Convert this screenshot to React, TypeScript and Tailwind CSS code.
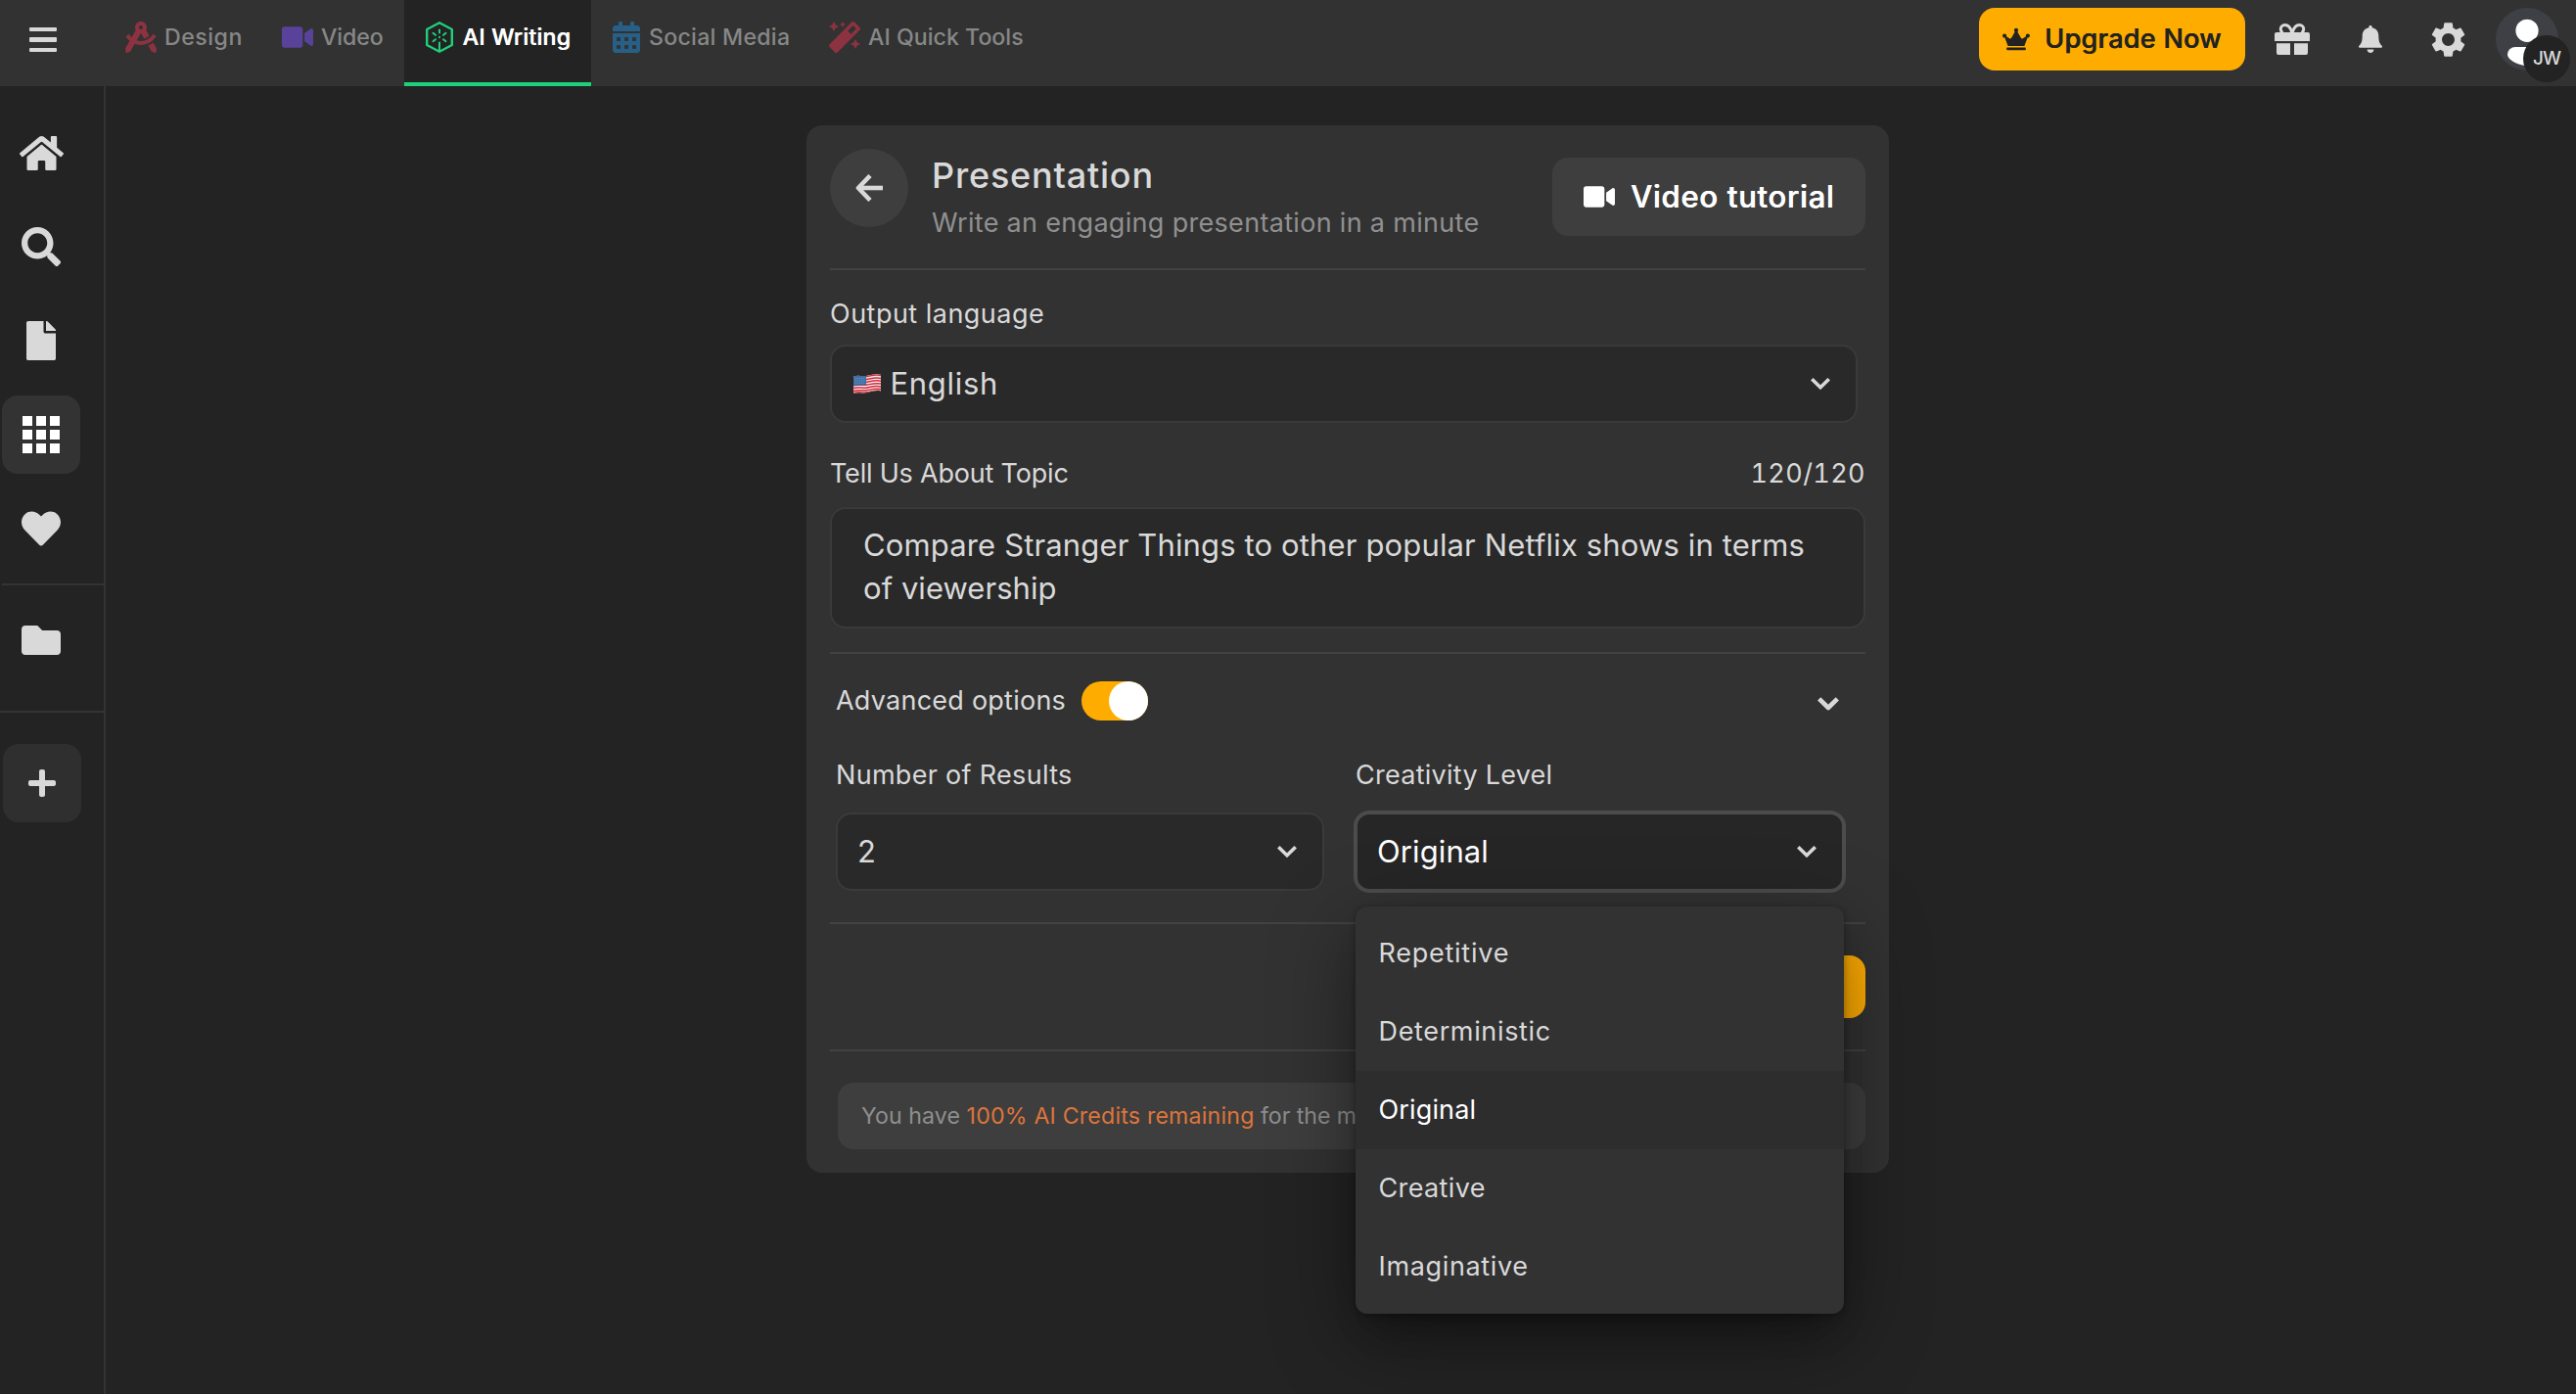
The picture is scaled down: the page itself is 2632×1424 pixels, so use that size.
import type { ReactNode } from "react";
import {
  FaCalendarAlt,
  FaCrown,
  FaDraftingCompass,
  FaFile,
  FaFolder,
  FaHeart,
  FaHome,
  FaMagic,
  FaPlus,
  FaSearch,
  FaVideo,
} from "react-icons/fa";
import { MdSettings } from "react-icons/md";

function AiIcon() {
  return (
    <svg viewBox="0 0 28 32" className="h-8 w-7 shrink-0" fill="none" stroke="#1fd07a" strokeWidth="2.4" strokeLinecap="round" strokeLinejoin="round">
      <path d="M14 1.3 26.8 8v16L14 30.7 1.2 24V8z" />
      <path d="M14 8.5v3M14 21.5V30M7.500 11.800l2.500 2M20.500 11.800l-2.500 2M7.500 20.200l2.500-2M20.500 20.200l-2.500-2" strokeWidth="2" />
      <path d="M14 15.8v.4" strokeWidth="2" />
    </svg>
  );
}

function GiftIcon() {
  return (
    <svg viewBox="0 0 36 32" className="h-8 w-9" fill="#d9d9d9">
      <path d="M17.8 9.5C16.500 4.500 13.500 1.500 10.600 1.500 8 1.500 6.300 3.400 6.300 5.600S7.500 9.500 9 9.500M18.200 9.500C19.500 4.500 22.500 1.500 25.400 1.500 28 1.500 29.700 3.400 29.700 5.600S28.500 9.500 27 9.500" fill="none" stroke="#d9d9d9" strokeWidth="3" />
      <path d="M2 9h32a2 2 0 0 1 2 2v7H0v-7a2 2 0 0 1 2-2z" />
      <path d="M2 20.300h14V32H4a2 2 0 0 1-2-2zM20 20.300h14V30a2 2 0 0 1-2 2H20z" />
    </svg>
  );
}

function BellIcon() {
  return (
    <svg viewBox="0 0 24 28" className="h-7 w-6" fill="#d9d9d9">
      <path d="M12 0c1 0 1.700.700 1.700 1.700v.600c4 .800 6.600 3.900 6.600 8.200 0 6 1.200 8.300 3.600 10.600.400.800 0 1.700-.900 1.700H1c-.900 0-1.300-.900-.900-1.700 2.400-2.300 3.600-4.600 3.600-10.600 0-4.300 2.600-7.400 6.600-8.200v-.600C10.300.700 11 0 12 0z" />
      <path d="M8.600 24.600h6.800c0 2-1.500 3.400-3.400 3.400s-3.400-1.400-3.400-3.400z" />
    </svg>
  );
}

function Chevron() {
  return (
    <svg viewBox="0 0 20 12" className="h-3 w-5 shrink-0" fill="none" stroke="#d9d9d9" strokeWidth="3.600">
      <path d="M1.300 1.300 10 9.700l8.700-8.400" />
    </svg>
  );
}

function Flag() {
  return (
    <svg viewBox="0 0 28 20" className="h-5 w-7 shrink-0">
      <defs>
        <clipPath id="wave">
          <path d="M0 2.500C5 .800 9 2.800 14 1.800S23 -.500 28 .800V17.500C23 16.300 19 17.800 14 19S5 18.300 0 19.800z" />
        </clipPath>
      </defs>
      <g clipPath="url(#wave)">
        <rect width="28" height="20" fill="#f4f0f0" />
        <g fill="none" stroke="#d3283b" strokeWidth="1.500">
          <path d="M0 3.200C5 1.500 9 3.500 14 2.500S23 .200 28 1.500" />
          <path d="M0 6.100C5 4.400 9 6.400 14 5.400S23 3.100 28 4.400" />
          <path d="M0 9C5 7.300 9 9.300 14 8.300S23 6 28 7.300" />
          <path d="M0 11.800C5 10.100 9 12.100 14 11.100S23 8.800 28 10.100" />
          <path d="M0 14.600C5 12.900 9 14.900 14 13.900S23 11.600 28 12.900" />
          <path d="M0 17.300C5 15.600 9 17.600 14 16.600S23 14.300 28 15.600" />
          <path d="M0 19.600C5 17.900 9 19.600 14 18.800S23 16.600 28 17.600" />
        </g>
        <path d="M0 0h13v11.300c-5 .900-8-.600-13 .900z" fill="#3d6ea5" />
        <path d="M1.500 4.500h11M1.500 6.800h11M1.500 9.100h11" stroke="#8fb0d0" strokeWidth=".8" strokeDasharray="1 1.200" />
      </g>
    </svg>
  );
}

function Tab({ width, icon, label }: { width: string; icon: ReactNode; label: ReactNode }) {
  return (
    <div className={`flex h-full shrink-0 items-center gap-2 pb-3 pl-5 text-[23.15px] font-medium text-[#878787] ${width}`}>
      {icon}
      {label}
    </div>
  );
}

function SideItem({ children, active = false }: { children: ReactNode; active?: boolean }) {
  return (
    <div className={`ml-0.5 flex h-20 w-20 items-center justify-center rounded-2xl ${active ? "bg-[#333333]" : ""}`}>
      {children}
    </div>
  );
}

function Divider({ className }: { className: string }) {
  return <div className={`h-0.5 bg-[#424242] ${className}`} />;
}

const options = [
  { label: "Repetitive", style: "tracking-[0.75px] text-[#d9d9d9]" },
  { label: "Deterministic", style: "tracking-[0.65px] text-[#d9d9d9]" },
  { label: "Original", style: "tracking-[0.15px] bg-[#2d2d2d] text-white" },
  { label: "Creative", style: "tracking-[0.38px] text-[#d9d9d9]" },
  { label: "Imaginative", style: "tracking-[0.65px] text-[#d9d9d9]" },
];

function Header() {
  return (
    <header className="flex h-[88px] w-full bg-[#323232]">
      <div className="flex w-[108px] flex-col gap-[6px] pt-[27.500px] pl-[30px]">
        <div className="h-[4.500px] w-7 rounded-[1px] bg-[#d9d9d9]" />
        <div className="h-[4.500px] w-7 rounded-[1px] bg-[#d9d9d9]" />
        <div className="h-[4.500px] w-7 rounded-[1px] bg-[#d9d9d9]" />
      </div>
      <Tab width="w-[160px]" icon={<FaDraftingCompass className="h-8 w-8 text-[#8d3240]" />} label={<span className="tracking-[0.5px]">Design</span>} />
      <Tab width="w-[145px]" icon={<FaVideo className="h-8 w-8 text-[#59429a]" />} label={<span className="tracking-[-0.08px]">Video</span>} />
      <div className="flex h-full w-[191px] shrink-0 items-center gap-[10px] border-b-4 border-[#1fd07a] bg-[#232323] pb-2 pl-[21.500px] text-[23.15px] font-medium text-white">
        <AiIcon />
        <span className="tracking-[0.22px] [text-shadow:0.4px_0_0_#ffffff]">AI Writing</span>
      </div>
      <Tab width="w-[223px]" icon={<FaCalendarAlt className="mr-px ml-0.5 h-8 w-7 text-[#285f86]" />} label={<span className="tracking-[0.26px]">Social Media</span>} />
      <Tab width="w-[240px]" icon={<FaMagic className="h-8 w-8 text-[#8d3240]" />} label={<span className="tracking-[0.02px]">AI Quick Tools</span>} />
      <div className="ml-auto flex items-start pr-[6px]">
        <button className="mt-2 flex h-16 w-[272px] items-center rounded-2xl bg-[#ffac00] pl-6 text-[27px] font-medium text-[#222222]">
          <FaCrown className="h-[24px] w-[28px]" />
          <span className="ml-[15px] tracking-[0.29px] [text-shadow:0.6px_0_0_#222222]">Upgrade Now</span>
        </button>
        <div className="mt-6 ml-[30px]"><GiftIcon /></div>
        <div className="mt-[26px] ml-[50px]"><BellIcon /></div>
        <MdSettings className="mt-[18.500px] ml-[46px] h-[43px] w-[43px] text-[#d9d9d9]" />
        <div className="relative mt-2 ml-[27px] h-16 w-[76px]">
          <svg viewBox="0 0 64 64" className="h-16 w-16">
            <circle cx="32" cy="32" r="32" fill="#3f4045" />
            <circle cx="32" cy="23.300" r="11.600" fill="#fff" />
            <path d="M20 40h24a8 8 0 0 1 8 8c0 4-9 11-20 11S12 52 12 48a8 8 0 0 1 8-8z" fill="#fff" />
          </svg>
          <div className="absolute top-7 left-7 flex h-12 w-12 items-center justify-center rounded-full bg-[#232323] text-[19px] font-medium tracking-[-1px] text-[#d9d9d9]">
            JW
          </div>
        </div>
      </div>
    </header>
  );
}

function Sidebar() {
  return (
    <aside className="flex w-[108px] flex-col border-r-2 border-[#333333] pt-7 text-[#d9d9d9]">
      <div className="flex flex-col gap-4">
        <SideItem><FaHome className="h-[45px] w-[45px]" /></SideItem>
        <SideItem><FaSearch className="h-10 w-10" /></SideItem>
        <SideItem><FaFile className="h-10 w-10" /></SideItem>
        <SideItem active>
          <div className="grid grid-cols-3 gap-1">
            {Array.from({ length: 9 }, (_, i) => (
              <div key={i} className="h-[10px] w-[10px] bg-white" />
            ))}
          </div>
        </SideItem>
        <SideItem><FaHeart className="h-10 w-10" /></SideItem>
      </div>
      <div className="mt-4 ml-0.5 h-0.5 bg-[#333333]" />
      <div className="mt-4"><SideItem><FaFolder className="h-10 w-10" /></SideItem></div>
      <div className="mt-8 h-0.5 bg-[#333333]" />
      <div className="mt-8 ml-[3px] flex h-20 w-20 items-center justify-center rounded-2xl bg-[#2f2f2f]">
        <FaPlus className="h-8 w-8" />
      </div>
    </aside>
  );
}

export default function App() {
  return (
    <div className="flex h-[1424px] w-[2632px] flex-col overflow-hidden bg-[#232323] font-['Inter',sans-serif] text-[27px] leading-9 text-[#d9d9d9]">
      <Header />
      <div className="flex flex-1">
        <Sidebar />
        <main className="pt-10 pl-[716px]">
          <section className="flex h-[1070px] w-[1106px] flex-col rounded-2xl bg-[#323232] px-6 pt-6">
            <div className="flex h-[124px] items-start border-b-2 border-[#424242]">
              <div className="flex h-20 w-20 items-center justify-center rounded-full bg-[#3e3e3e]">
                <svg viewBox="0 0 28 28" className="h-7 w-7" fill="none" stroke="#d9d9d9" strokeWidth="4.600">
                  <path d="M15 1.500 3 14l12 12.500" strokeLinejoin="round" />
                  <path d="M3 14h25" />
                </svg>
              </div>
              <div className="ml-6 pt-[5px]">
                <h1 className="text-[36px] leading-[44px] font-medium tracking-[0.8px]">Presentation</h1>
                <p className="mt-[9px] tracking-[0.31px] text-[#909090]">Write an engaging presentation in a minute</p>
              </div>
              <button className="mt-[9px] ml-auto flex h-20 w-80 items-center rounded-2xl bg-[#3e3e3e] pl-8 text-[31px] font-medium text-white">
                <FaVideo className="h-8 w-8" />
                <span className="ml-4 tracking-[0.74px] [text-shadow:0.6px_0_0_#ffffff]">Video tutorial</span>
              </button>
            </div>

            <label className="mt-[27px] tracking-[0.48px]">Output language</label>
            <div className="mt-[13px] flex h-20 w-[1050px] items-center rounded-2xl border-2 border-[#3a3a3a] bg-[#292929] pr-[26px] pl-[21.500px] text-[31px]">
              <Flag />
              <span className="ml-[10px] flex-1 tracking-[0.7px]">English</span>
              <Chevron />
            </div>

            <div className="mt-[34px] flex justify-between">
              <label className="tracking-[-0.2px]">Tell Us About Topic</label>
              <span className="tracking-[0.4px] tabular-nums">120/120</span>
            </div>
            <div className="mt-4 flex h-[124px] flex-col rounded-2xl border-2 border-[#3a3a3a] bg-[#292929] pt-[15px] pl-8 text-[31px] leading-[44px] whitespace-nowrap">
              <span className="tracking-[0.14px]">Compare Stranger Things to other popular Netflix shows in terms</span>
              <span className="tracking-[0.04px]">of viewership</span>
            </div>

            <Divider className="mt-6" />

            <div className="mt-7 flex h-10 items-center pr-[27px] pl-[6px]">
              <span className="w-[251px] tracking-[0.24px]">Advanced options</span>
              <div className="flex w-[68px] justify-end rounded-full bg-[#ffac00]">
                <div className="h-10 w-10 rounded-full bg-white" />
              </div>
              <svg viewBox="0 0 22 14" className="mt-[6px] ml-auto h-[14px] w-[22px]" fill="none" stroke="#d9d9d9" strokeWidth="4.600" strokeLinejoin="round">
                <path d="M1.700 1.800 11 11l9.300-9.200" />
              </svg>
            </div>

            <div className="mt-[38px] grid grid-cols-[499px_499px] gap-8 pl-[6px]">
              <div className="flex flex-col gap-5">
                <label className="tracking-[0.3px]">Number of Results</label>
                <div className="flex h-20 items-center justify-between rounded-2xl border-2 border-[#3a3a3a] bg-[#292929] pr-[26px] pl-[20px] text-[31px]">
                  2
                  <Chevron />
                </div>
              </div>
              <div className="relative flex flex-col gap-5">
                <label className="tracking-[0.26px]">Creativity Level</label>
                <div className="flex h-20 items-center justify-between rounded-[14px] border-2 border-[#4c4c4c] bg-[#262626] pr-[26px] pl-[20px] text-[31px] tracking-[0.1px] text-white ring-2 ring-[#4c4c4c]">
                  Original
                  <Chevron />
                </div>
                <ul className="absolute top-[152px] left-0 z-10 w-full rounded-xl bg-[#323232] py-2 shadow-[0_1px_6px_rgba(0,0,0,0.3),0_26px_30px_-14px_rgba(0,0,0,0.25),0_24px_84px_2px_rgba(0,0,0,0.4)]">
                  {options.map((o) => (
                    <li key={o.label} className={`flex h-20 items-center pl-[23.500px] ${o.style}`}>
                      {o.label}
                    </li>
                  ))}
                </ul>
              </div>
            </div>

            <Divider className="mt-8" />
            <button className="mt-8 ml-auto h-16 w-[260px] rounded-2xl bg-[#ffac00]" />
            <Divider className="mt-8" />

            <div className="mt-8 ml-2 flex h-[68px] items-center rounded-2xl bg-[#3e3e3e] pl-6 text-[23.15px] whitespace-pre text-[#8e8e8e]">
              <span className="tracking-[0.08px]">You have </span>
              <span className="tracking-[0.2px] text-[#df753b]">100% AI Credits remaining</span>
              <span className="tracking-[-0.05px]"> for the month</span>
            </div>
          </section>
        </main>
      </div>
    </div>
  );
}
